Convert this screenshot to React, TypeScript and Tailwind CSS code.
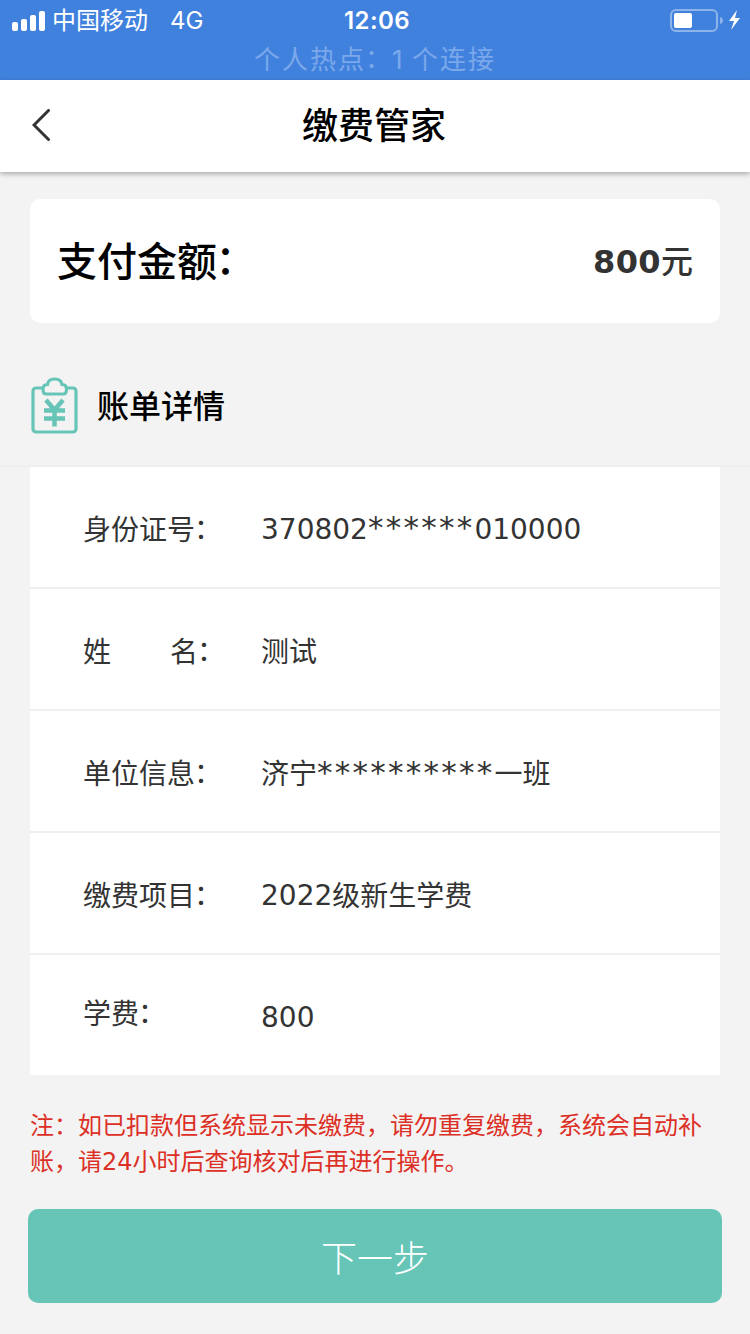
import type { ReactNode } from "react";

type Row = { label: ReactNode; value: ReactNode };

const Stars = ({ count }: { count: number }) => (
  <span className="relative -top-px text-[31px] leading-none tracking-[2.25px]">{"*".repeat(count)}</span>
);

const Colon = () => <span className="relative -top-[0.04em] -left-[0.04em]">：</span>;

const ROWS: Row[] = [
  { label: <>身份证号<Colon /></>, value: <>370802<Stars count={6} />010000</> },
  { label: <><span className="mr-[59px]">姓</span>名<Colon /></>, value: <span className="relative top-px">测试</span> },
  { label: <>单位信息<Colon /></>, value: <span className="relative top-px">济宁<Stars count={10} />一班</span> },
  { label: <>缴费项目<Colon /></>, value: <>2022<span className="relative top-px">级新生学费</span></> },
  { label: <span className="relative -top-[4px]">学费<Colon /></span>, value: "800" },
];

function StatusBar() {
  return (
    <div className="h-20 bg-[#4181de] text-white">
      <div className="grid h-10 grid-cols-3 items-center">
        <div className="flex items-center pl-3">
          <svg width="33" height="20" viewBox="0 0 33 20" fill="currentColor">
            <rect x="0" y="11" width="6" height="9" rx="2" />
            <rect x="9" y="8" width="6" height="12" rx="2" />
            <rect x="18" y="4" width="6" height="16" rx="2" />
            <rect x="27" y="0" width="6" height="20" rx="2" />
          </svg>
          <span className="ml-[7px] pt-px text-2xl leading-10">中国移动</span>
          <span className="ml-[22px] pt-px font-['Inter','Noto_Sans_CJK_SC',sans-serif] text-2xl leading-10">4G</span>
        </div>
        <div className="pt-px pl-1 text-center font-['Inter','Noto_Sans_CJK_SC',sans-serif] text-2xl leading-10 font-semibold tracking-[0.4px]">12:06</div>
        <div className="flex items-center justify-end pr-2">
          <svg width="72" height="24" viewBox="0 0 72 24">
            <rect x="1" y="1" width="46" height="21" rx="5" fill="none" stroke="#8db3eb" strokeWidth="2" />
            <rect x="4" y="4" width="18" height="15" rx="2" fill="#fff" />
            <path d="M50 8c4 1 4 6 0 7z" fill="#8db3eb" />
            <path d="M67 1 59 12h5l-3 9 9-12h-5z" fill="#fff" />
          </svg>
        </div>
      </div>
      <div className="flex justify-center text-[26px] leading-10 tracking-[2px] text-[#7ba8ea]">
        <span>个人热点<Colon /></span>
        <span className="-ml-0.5 w-5 font-['Inter','Noto_Sans_CJK_SC',sans-serif] leading-[39px]">1</span>
        <span>个连接</span>
      </div>
    </div>
  );
}

function BillIcon() {
  return (
    <svg className="shrink-0" width="48" height="58" viewBox="0 0 48 58" fill="none" stroke="#66c5b7">
      <path d="M11 11H5a3 3 0 0 0-3 3V52a3 3 0 0 0 3 3h37a3 3 0 0 0 3-3V14a3 3 0 0 0-3-3h-6" strokeWidth="3.200" />
      <path d="M15 17h17.500c2.500 0 3-2 3-5 0-3-1.500-4.500-4.500-4.500C30.500 3.500 28 2 23.500 2S17 3.500 16.500 7.500c-3 0-4.500 1.500-4.500 4.500 0 3 .5 5 3 5Z" strokeWidth="3.200" />
      <path d="m15 23 8.500 10L32 23M13 33.500h21M13 41.500h21M23.500 33v16.500" strokeWidth="4.500" />
    </svg>
  );
}

export default function App() {
  return (
    <div className="flex h-[1334px] w-[750px] flex-col overflow-hidden bg-[#f3f3f3] font-['DejaVu_Sans','Noto_Sans_CJK_SC',sans-serif] text-[#333]">
      <StatusBar />
      <header className="grid h-[92px] shrink-0 grid-cols-[1fr_auto_1fr] items-center bg-white shadow-[0_2px_5px_rgba(0,0,0,0.3)]">
        <svg className="ml-8" width="20" height="34" viewBox="0 0 20 34" fill="none" stroke="#333" strokeWidth="3" strokeLinecap="round">
          <path d="M16.500 1.500 2 16l14.500 14.500" />
        </svg>
        <h1 className="pt-px pr-0.5 text-4xl font-medium text-black">缴费管家</h1>
      </header>

      <main>
        <section className="mx-[30px] mt-[27px] flex h-[124px] items-center justify-between rounded-[10px] bg-white px-[27px]">
          <h2 className="pt-0.5 text-[40px] font-medium text-black">支付金额<Colon /></h2>
          <p className="pt-0.5 text-[32px]">
            <span className="font-bold tracking-[0.4px]">800</span>
            <span className="font-medium">元</span>
          </p>
        </section>

        <div className="mt-[53px] flex h-[60px] items-center gap-[18px] pl-[31px]">
          <BillIcon />
          <h3 className="pt-0.5 text-[32px] font-medium text-black">账单详情</h3>
        </div>

        <div className="mt-[29px] border-t-2 border-[#efefef]">
          <dl className="mx-[30px] divide-y-2 divide-[#efefef] bg-white text-[28px]">
            {ROWS.map((row, i) => (
              <div key={i} className="flex h-[122px] items-center pt-1.5 pl-[53px] last:h-[120px]">
                <dt className="w-[178px] shrink-0 pt-0.5 whitespace-nowrap">{row.label}</dt>
                <dd>{row.value}</dd>
              </div>
            ))}
          </dl>
        </div>

        <p className="mt-[33px] ml-[30px] w-[690px] text-2xl leading-9 text-[#dc3026]">
          注：如已扣款但系统显示未缴费，请勿重复缴费，系统会自动补账，请24小时后查询核对后再进行操作。
        </p>
        <button className="mx-7 mt-[29px] h-[94px] w-[694px] rounded-[10px] bg-[#66c5b7] pt-2 text-4xl font-light text-white">
          下一步
        </button>
      </main>
    </div>
  );
}
